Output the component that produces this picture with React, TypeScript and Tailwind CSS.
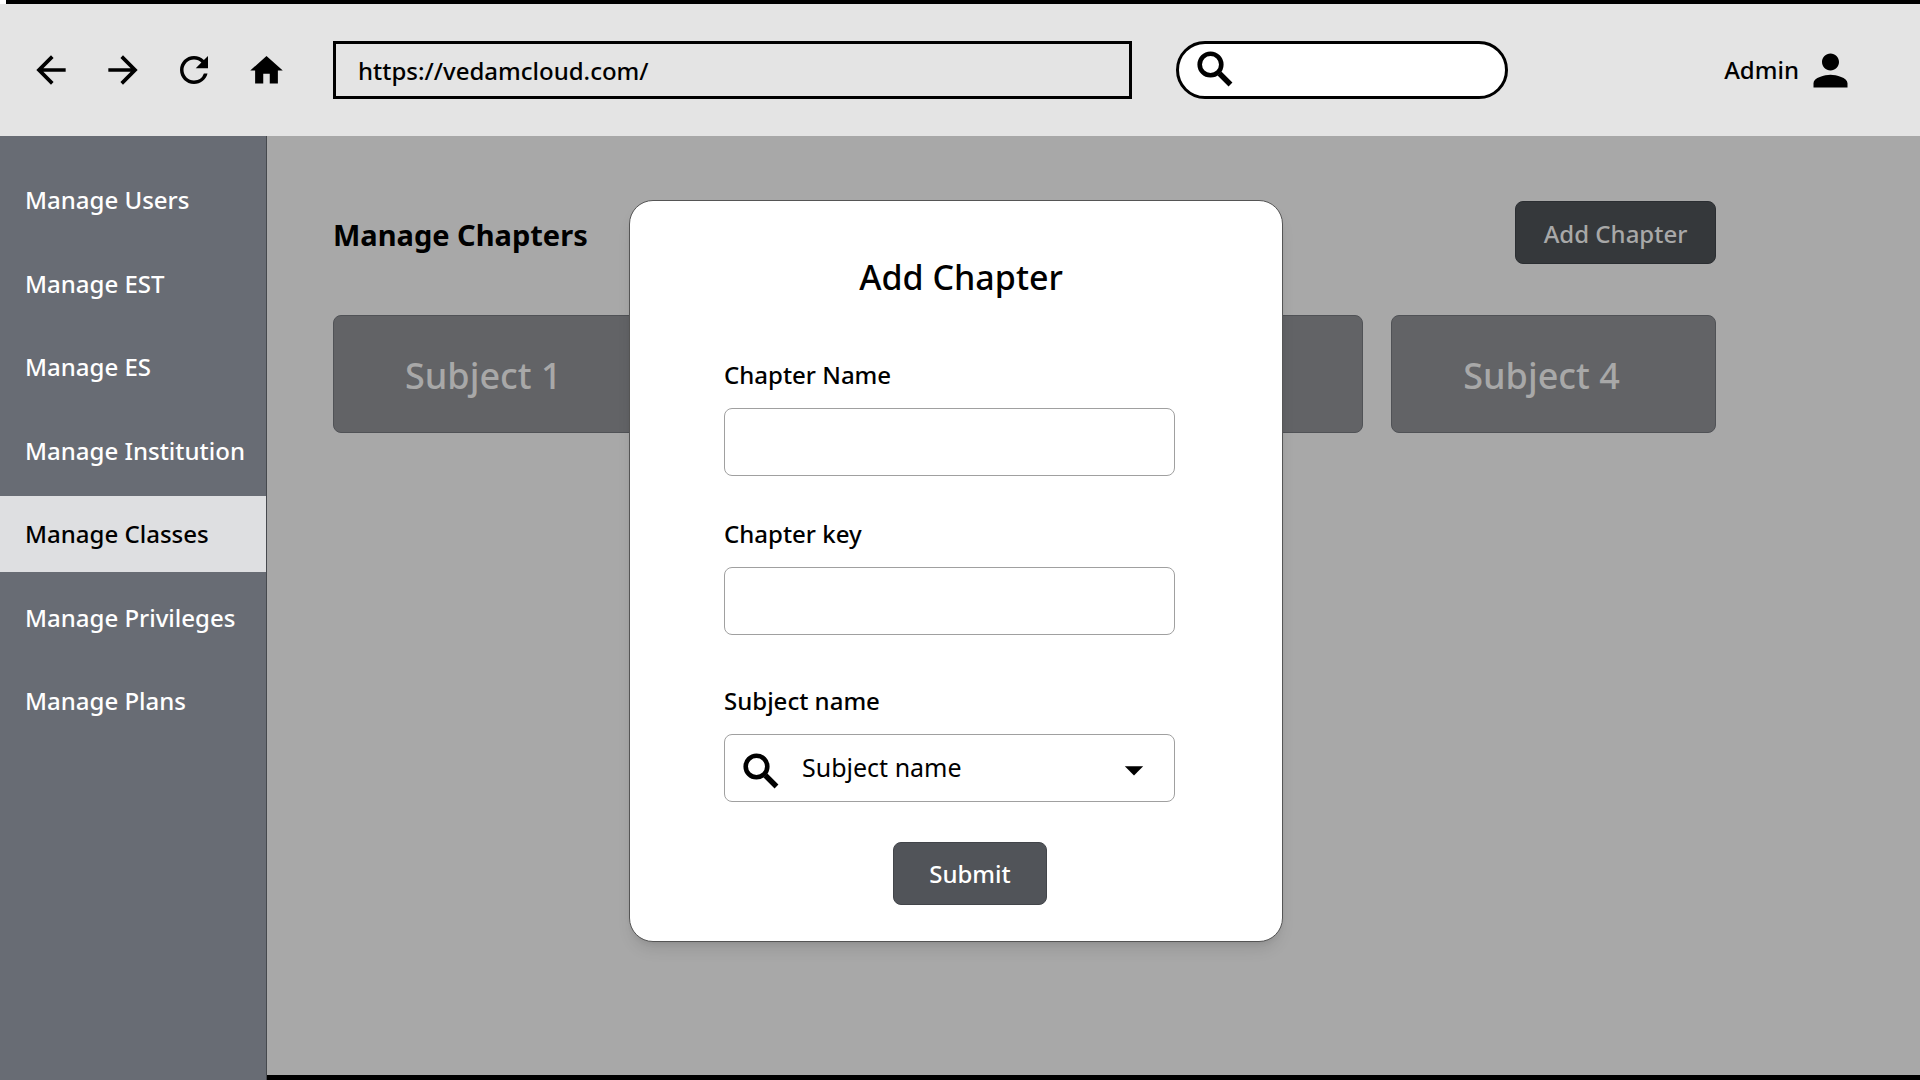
import {
  MdArrowBack,
  MdArrowDropDown,
  MdArrowForward,
  MdHome,
  MdPerson,
  MdRefresh,
} from "react-icons/md";

const menu = [
  "Manage Users",
  "Manage EST",
  "Manage ES",
  "Manage Institution",
  "Manage Classes",
  "Manage Privileges",
  "Manage Plans",
];

// the two middle cards sit behind the open modal
const subjects = ["Subject 1", "", "", "Subject 4"];

function SearchIcon({ className }: { className: string }) {
  return (
    <svg
      viewBox="0 0 36 36"
      fill="none"
      stroke="currentColor"
      aria-hidden="true"
      className={className}
    >
      <circle cx="13.5" cy="13.5" r="10.8" strokeWidth="4.6" />
      <path d="M22.5 22.5 L33.5 33.5" strokeWidth="5.4" />
    </svg>
  );
}

function Header() {
  return (
    <div className="bg-white">
      <div className="ml-1.5 h-1 bg-black"></div>
      <header className="flex h-[132px] items-center bg-[#e4e4e4] pl-[29px] pr-16 text-black">
        <div className="flex w-[304px] shrink-0 items-center gap-7">
          <button aria-label="Back">
            <MdArrowBack size={44} />
          </button>
          <button aria-label="Forward">
            <MdArrowForward size={44} />
          </button>
          <button aria-label="Reload">
            <MdRefresh size={42} />
          </button>
          <button aria-label="Home" className="pl-1">
            <MdHome size={39} />
          </button>
        </div>
        <input
          type="text"
          aria-label="Address"
          defaultValue="https://vedamcloud.com/"
          className="h-[58px] min-w-0 flex-1 border-3 border-black px-[22px] text-2xl font-medium outline-none"
        />
        <div className="relative ml-11 w-[332px] shrink-0">
          <SearchIcon className="absolute left-[21px] top-2.5 size-9" />
          <input
            type="search"
            aria-label="Search"
            className="h-[58px] w-full rounded-full border-3 border-black bg-white pl-16 pr-6 text-2xl outline-none"
          />
        </div>
        <button className="ml-[216px] flex shrink-0 items-center gap-1.5 text-2xl font-medium">
          Admin
          <MdPerson size={51} />
        </button>
      </header>
    </div>
  );
}

function Sidebar() {
  return (
    <aside className="w-[267px] shrink-0 border-r border-[#46494e] bg-[#686c74] pt-[26px]">
      <nav className="flex h-[577px] flex-col justify-between">
        {menu.map((item) => (
          <a
            key={item}
            href="#"
            className={
              item === "Manage Classes"
                ? "flex h-[76px] items-center whitespace-nowrap bg-[#dedfe1] pl-[25px] text-2xl font-medium text-black"
                : "flex h-[76px] items-center whitespace-nowrap pl-[25px] text-2xl font-medium text-white"
            }
          >
            {item}
          </a>
        ))}
      </nav>
    </aside>
  );
}

function AddChapterModal() {
  return (
    <div className="absolute inset-x-0 top-16 flex justify-center pr-2">
      <form
        role="dialog"
        aria-labelledby="modal-title"
        className="w-[654px] rounded-3xl border border-[#555555] bg-white px-[94px] pb-9 pt-[52px] text-black shadow-lg"
      >
        <h2
          id="modal-title"
          className="pl-2.5 text-center text-[34px] leading-12 font-medium"
        >
          Add Chapter
        </h2>
        <div className="mt-14 flex w-[451px] flex-col">
          <label htmlFor="name" className="text-2xl leading-9 font-medium">
            Chapter Name
          </label>
          <input
            id="name"
            type="text"
            className="mt-[15px] h-[68px] rounded-lg border border-[#a0a0a0] px-5 text-2xl"
          />
          <label
            htmlFor="key"
            className="mt-10 text-2xl leading-9 font-medium"
          >
            Chapter key
          </label>
          <input
            id="key"
            type="text"
            className="mt-[15px] h-[68px] rounded-lg border border-[#a0a0a0] px-5 text-2xl"
          />
          <label
            htmlFor="subject"
            className="mt-12 text-2xl leading-9 font-medium"
          >
            Subject name
          </label>
          <div className="relative mt-[15px]">
            <SearchIcon className="absolute left-[19px] top-[19px] size-9" />
            <select
              id="subject"
              className="h-[68px] w-full appearance-none rounded-lg border border-[#a0a0a0] pl-[77px] text-[25px]"
            >
              <option>Subject name</option>
            </select>
            <MdArrowDropDown
              size={44}
              className="pointer-events-none absolute right-[19px] top-3.5"
            />
          </div>
        </div>
        <button
          type="submit"
          className="ml-[169px] mt-10 h-[63px] w-[154px] rounded-lg border border-[#42454a] bg-[#515459] text-2xl font-medium text-white"
        >
          Submit
        </button>
      </form>
    </div>
  );
}

export default function App() {
  return (
    <div className="flex min-h-screen flex-col font-['Noto_Sans','Open_Sans',sans-serif]">
      <Header />
      <div className="relative flex flex-1">
        <Sidebar />
        <main className="min-w-0 flex-1 border-b-5 border-black bg-[#a8a8a8] pl-[66px] pr-[204px] pt-[65px]">
          <div className="flex items-center justify-between">
            <h1 className="pt-1 text-[29px] leading-10 font-bold text-black">
              Manage Chapters
            </h1>
            <button className="h-[63px] w-[201px] rounded-lg border border-[#2b2e32] bg-[#35383b] pt-0.5 text-2xl font-medium text-[#a8a8a8]">
              Add Chapter
            </button>
          </div>
          <div className="mt-[51px] grid grid-cols-4 gap-7">
            {subjects.map((subject, i) => (
              <button
                key={i}
                className="h-[118px] rounded-lg border border-[#505256] bg-[#626366] pl-[71px] pt-1 text-left text-4xl font-medium text-[#a8a8a8]"
              >
                {subject}
              </button>
            ))}
          </div>
        </main>
        <AddChapterModal />
      </div>
    </div>
  );
}
